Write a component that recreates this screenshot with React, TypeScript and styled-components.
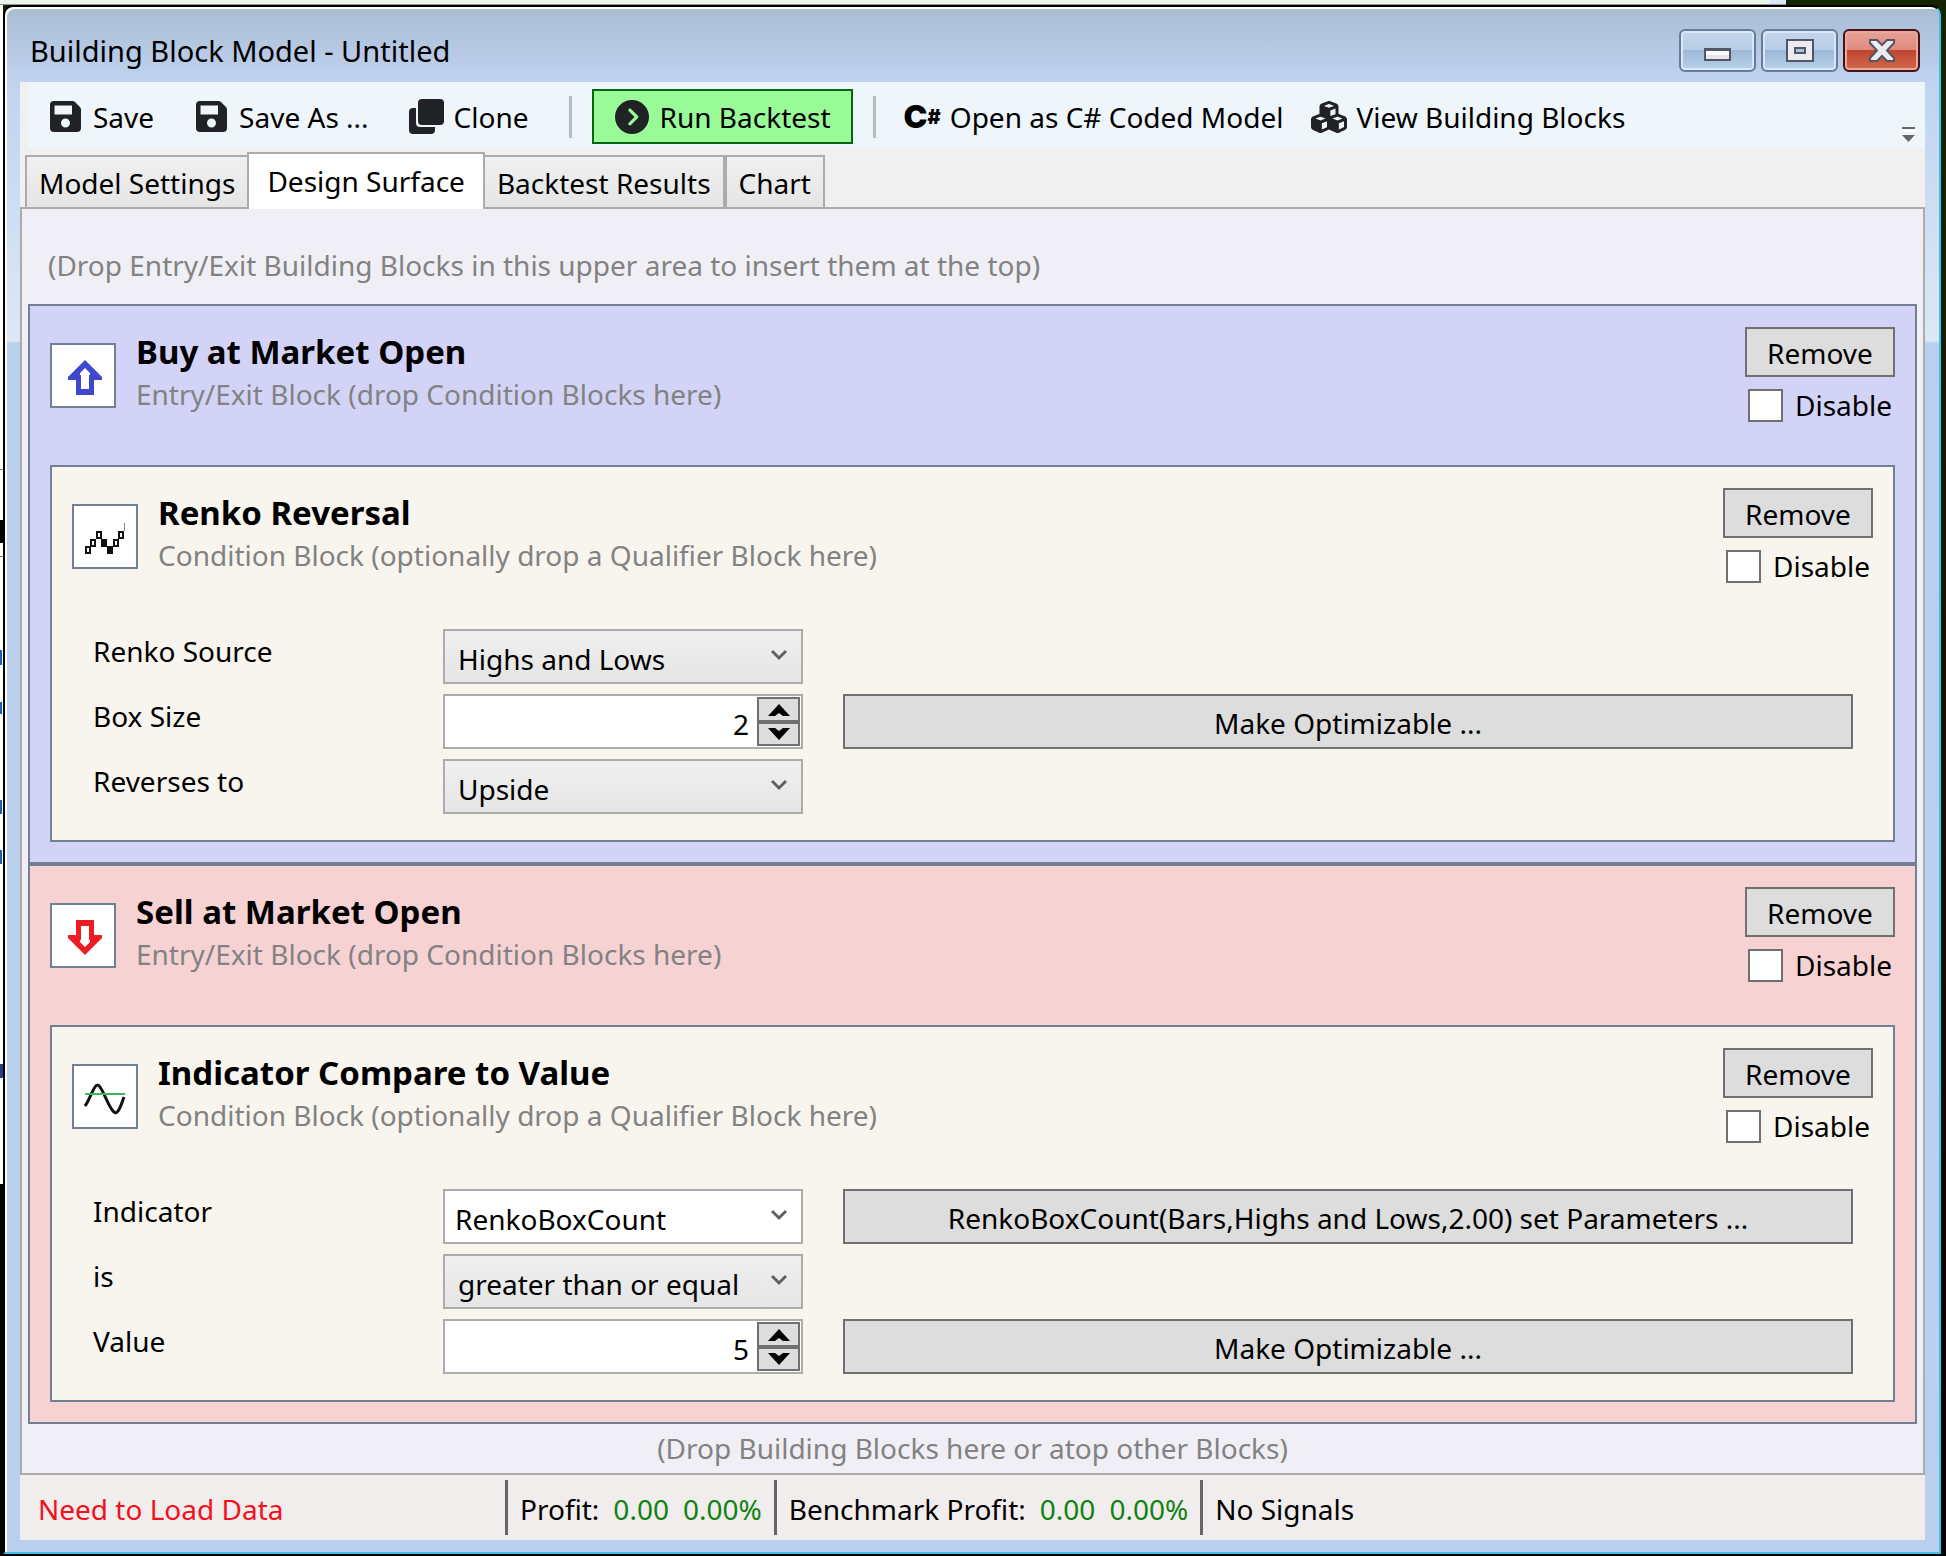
import React, { useId, useState } from "react";
import styled, { createGlobalStyle } from "styled-components";
import { FaCircleChevronRight, FaCubes } from "react-icons/fa6";

const GlobalStyle = createGlobalStyle`
  * { box-sizing: border-box; }
  html, body, #root { height: 100%; }
  body { margin: 0; background: #000; }
  body, button, input, select {
    font-family: "Noto Sans", "Open Sans", sans-serif;
    font-size: 28px;
    line-height: 40px;
    color: #000;
  }
`;

const Desktop = styled.div`
  min-height: 100vh;
  display: flex;
  padding: 5px 5px 2px 3px;
  background:
    linear-gradient(#8c98a0, #8c98a0) 0 4px / 1786px 1px no-repeat,
    linear-gradient(90deg, #ebf6e8 1770px, #dbe6f8 1770px, #dbe6f8 1786px, #142400 1786px) 0 0 / 100% 5px no-repeat,
    linear-gradient(#1a5fb0, #1a5fb0) 0 650px / 2px 15px no-repeat,
    linear-gradient(#1a5fb0, #1a5fb0) 0 702px / 2px 12px no-repeat,
    linear-gradient(#1a5fb0, #1a5fb0) 0 800px / 2px 14px no-repeat,
    linear-gradient(#1a5fb0, #1a5fb0) 0 850px / 2px 14px no-repeat,
    linear-gradient(#2c3c8c, #2c3c8c) 0 1064px / 3px 14px no-repeat,
    linear-gradient(#777, #777) 0 469px / 3px 1px no-repeat,
    linear-gradient(#777, #777) 0 556px / 3px 1px no-repeat,
    linear-gradient(#fff 515px, #000 515px, #000 538px, #fff 538px, #fff 1179px, #000 1179px) 0 5px / 3px 100% no-repeat,
    linear-gradient(#142400, #0a1200 60%, #000);
`;

const Window = styled.main`
  flex: 1;
  display: flex;
  flex-direction: column;
  padding: 0 14px 12px 15px;
  border: 2px solid #000;
  border-color: #000 #37c4f4 #43bde6 #000;
  border-radius: 10px 10px 0 0;
  box-shadow: inset 2px 2px 0 #fff;
  background:
    linear-gradient(#a9bdd3, #b7c9e4 45px, #c0d4f0 76px, transparent 76px),
    linear-gradient(#c0d4f0 76px, #dce8f5 334px, #b9d0ec 336px, #bacfee);
`;

const TitleBar = styled.header`
  display: flex;
  justify-content: space-between;
  align-items: flex-start;
  height: 75px;
  padding: 22px 5px 0 10px;
`;

const WindowTitle = styled.h1`
  margin: 0;
  padding-top: 2px;
  font-size: 29px;
  font-weight: 400;
`;

const CaptionButtons = styled.div`
  display: flex;
  gap: 5px;
`;

const CaptionButton = styled.button<{ $close?: boolean }>`
  display: flex;
  align-items: center;
  justify-content: center;
  width: 77px;
  height: 43px;
  padding: 0;
  border: 2px solid ${(p) => (p.$close ? "#43141a" : "#667c9c")};
  border-radius: 6px;
  box-shadow: inset 0 0 0 2px ${(p) => (p.$close ? "#eca79b" : "#d8e6f6")};
  background: ${(p) =>
    p.$close
      ? "linear-gradient(#e8a195, #dd8b7e 50%, #bf4530 50%, #d2694f)"
      : "linear-gradient(#c3d6ec, #b9cde6 50%, #9bb8d6 50%, #b9d2ea)"};
`;

const Client = styled.div`
  flex: 1;
  display: flex;
  flex-direction: column;
  background: #f0f0f0;
`;

const Toolbar = styled.div`
  display: flex;
  align-items: center;
  height: 67px;
  margin-left: 8px;
  padding: 2px 9px 0 22px;
  background: #eef5fb;
`;

const ToolButton = styled.button<{ $gap: number; $after: number }>`
  display: flex;
  align-items: center;
  gap: ${(p) => p.$gap}px;
  margin-right: ${(p) => p.$after}px;
  padding: 0;
  border: 0;
  background: none;
  white-space: nowrap;
`;

const RunButton = styled(ToolButton)`
  height: 55px;
  padding: 0 20px 0 21px;
  border: 2px solid #0a6410;
  background: #98fb98;
`;

const Divider = styled.span<{ $after: number }>`
  width: 3px;
  height: 42px;
  margin-right: ${(p) => p.$after}px;
  background: #b4bccb;
`;

const CSharp = styled.span`
  display: flex;
  align-items: center;
  font-family: Inter, sans-serif;
  font-size: 32px;
  font-weight: 900;
  line-height: 34px;

  small {
    font-size: 20px;
    line-height: 22px;
  }
`;

const Overflow = styled.button`
  display: flex;
  align-self: flex-end;
  margin: 0 0 6px auto;
  padding: 0;
  border: 0;
  background: none;
`;

const TabList = styled.div`
  display: flex;
  align-items: flex-end;
  height: 58px;
  padding-left: 5px;
`;

const Tab = styled.button<{ $selected?: boolean }>`
  position: relative;
  height: ${(p) => (p.$selected ? 57 : 52)}px;
  margin-right: ${(p) => (p.$selected ? -2 : 0)}px;
  margin-left: ${(p) => (p.$selected ? -2 : 0)}px;
  margin-bottom: ${(p) => (p.$selected ? -2 : 0)}px;
  padding: ${(p) => (p.$selected ? "0 18px 1px" : "2px 12px 0")};
  border: 2px solid #acacac;
  border-bottom: 0;
  background: ${(p) => (p.$selected ? "#fff" : "linear-gradient(#f0f0f0, #e5e5e5)")};
  z-index: ${(p) => (p.$selected ? 1 : 0)};
  white-space: nowrap;
`;

const Surface = styled.section`
  flex: 1;
  display: flex;
  flex-direction: column;
  padding: 0 6px;
  border: 2px solid #acacac;
  background: #f0eff5;
`;

const DropHint = styled.p<{ $top?: boolean }>`
  margin: 0;
  padding: ${(p) => (p.$top ? "36px 20px 19px" : "4px 0")};
  text-align: ${(p) => (p.$top ? "left" : "center")};
  color: #828282;
`;

const Block = styled.article<{ $tone: string }>`
  padding: 20px;
  border: 2px solid #728096;
  background: ${(p) => p.$tone};
`;

const BlockHead = styled.header`
  display: flex;
  align-items: flex-start;
  height: 139px;
`;

const IconBox = styled.span`
  display: flex;
  align-items: center;
  justify-content: center;
  width: 66px;
  height: 65px;
  margin-top: 17px;
  padding: 4px 0 0 4px;
  border: 2px solid #728096;
  background: #fff;
`;

const BlockText = styled.div`
  flex: 1;
  padding: 4px 0 0 20px;
`;

const BlockTitle = styled.h2`
  margin: 0;
  font-size: 33px;
  font-weight: 700;
  line-height: 44px;
`;

const BlockNote = styled.p`
  margin: 0;
  color: #828282;
`;

const BlockActions = styled.div`
  width: 150px;
  padding-top: 1px;
`;

const PushButton = styled.button<{ $tall?: boolean }>`
  width: 100%;
  height: ${(p) => (p.$tall ? 55 : 50)}px;
  padding: 2px 0 0;
  border: 2px solid #707070;
  background: #ddd;
`;

const CheckLabel = styled.label`
  display: flex;
  align-items: center;
  gap: 12px;
  margin-top: 8px;
  padding-left: 3px;
`;

const CheckBox = styled.input`
  appearance: none;
  width: 35px;
  height: 33px;
  margin: 0;
  border: 2px solid #707070;
  background: #fff;

  &:checked { box-shadow: inset 0 0 0 6px #fff; background: #212121; }
`;

const Form = styled.div`
  display: grid;
  gap: 10px;
  padding: 3px 20px 6px;
`;

const FormRow = styled.div`
  display: grid;
  grid-template-columns: 351px 360px 1fr;
  height: 55px;
`;

const FieldLabel = styled.label`
  padding: 2px 0 0 1px;
`;

const ActionCell = styled.div`
  padding-left: 40px;
`;

const SelectFrame = styled.div<{ $editable?: boolean }>`
  display: grid;
  align-items: center;
  height: 55px;
  border: 2px solid #acacac;
  background: ${(p) => (p.$editable ? "#fff" : "linear-gradient(#f0f0f0, #e5e5e5)")};

  > * { grid-area: 1 / 1; }
  svg { justify-self: end; margin: 0 14px 3px 0; pointer-events: none; }
`;

const Select = styled.select<{ $editable?: boolean }>`
  appearance: none;
  width: 100%;
  height: 51px;
  padding: 4px 54px 0 ${(p) => (p.$editable ? 10 : 13)}px;
  border: 0;
  background: none;
`;

const Spinner = styled.div`
  display: flex;
  height: 55px;
  padding: 1px;
  border: 2px solid #acacac;
  background: #fff;
`;

const NumberInput = styled.input`
  flex: 1;
  min-width: 0;
  padding: 5px 8px 0 0;
  border: 0;
  background: none;
  text-align: right;
`;

const SpinButtons = styled.div`
  display: grid;
  grid-template-rows: 1fr 1fr;
  width: 43px;
`;

const SpinButton = styled.button`
  display: flex;
  align-items: center;
  justify-content: center;
  padding: 1px 0 0;
  border: 2px solid #707070;
  background: #ddd;
`;

const StatusBar = styled.footer`
  display: flex;
  align-items: center;
  height: 65px;
  background: #f0edec;
`;

const StatusItem = styled.div<{ $first?: boolean }>`
  display: flex;
  align-items: center;
  gap: 14px;
  width: ${(p) => (p.$first ? "485px" : "auto")};
  height: 55px;
  padding: ${(p) => (p.$first ? "3px 0 0 18px" : "3px 12px 0")};
  border-left: ${(p) => (p.$first ? "0" : "3px solid #666")};
  color: ${(p) => (p.$first ? "#f4101c" : "#000")};
  white-space: nowrap;
`;

const Amount = styled.span`
  color: #128212;
`;

const SaveIcon = () => (
  <svg width="31" height="31" viewBox="0 0 31 31" aria-hidden="true">
    <path fillRule="evenodd" fill="#212226" d="M4 0h18.500q1.500 0 2.500 1l5 5q1 1 1 2.500V27q0 4-4 4H4q-4 0-4-4V4q0-4 4-4zM4.500 4.500v9h17.500v-9zM15.500 17.500a4.500 4.500 0 1 0 0 9a4.500 4.500 0 1 0 0-9z" />
  </svg>
);

const CloneIcon = () => (
  <svg width="35" height="35" viewBox="0 0 35 35" aria-hidden="true">
    <rect x="9" y="0" width="26" height="26" rx="4" fill="#212226" />
    <path fill="#212226" d="M4 9h3v15q0 4 4 4h15v3q0 4-4 4H4q-4 0-4-4V13q0-4 4-4z" />
  </svg>
);

const OverflowIcon = () => (
  <svg width="14" height="16" viewBox="0 0 14 16" aria-hidden="true">
    <path fill="#fff" d="M2 3h12v2H2zM2 9h12L8 16z" />
    <path fill="#666" d="M0 0h13v2H0zM0 8h13L6.500 15z" />
  </svg>
);

const MinimizeIcon = () => (
  <svg width="28" height="23" viewBox="0 0 28 23" aria-hidden="true">
    <rect x="1" y="10" width="25" height="11" fill="#e6e6ea" stroke="#535666" strokeWidth="2" />
    <path fill="#535666" d="M0 9h27v3H0z" />
    <path fill="#fff" d="M2 12h23v4H2z" />
  </svg>
);

const MaximizeIcon = () => (
  <svg width="28" height="23" viewBox="0 0 28 23" aria-hidden="true">
    <rect x="1" y="1" width="26" height="21" fill="#ececf0" stroke="#535666" strokeWidth="2" />
    <rect x="9" y="9" width="10" height="5" fill="#a9c1de" stroke="#535666" strokeWidth="2" />
  </svg>
);

const CloseIcon = () => (
  <svg width="28" height="23" viewBox="0 0 28 23" aria-hidden="true">
    <path fill="#ececf0" stroke="#535666" strokeWidth="2" d="M2 1h7l5 5 5-5h7v3l-7 7.500 7 7.500v3h-7l-5-5-5 5H2v-3l7-7.500L2 4z" />
  </svg>
);

const ArrowIcon = ({ down }: { down?: boolean }) => (
  <svg width="34" height="35" viewBox="0 0 34 35" aria-hidden="true">
    <g transform={down ? "rotate(180 17 17.500)" : undefined}>
      <path fillRule="evenodd" fill={down ? "#ed1c24" : "#3f48cc"} d="M17 0L34 17v3h-8v15H8V20H0v-3zM17 8l-5 5v2h1v14h8V15h1v-2z" />
    </g>
  </svg>
);

const RenkoIcon = () => (
  <svg width="46" height="32" viewBox="0 0 46 32" aria-hidden="true">
    <g fill="none" stroke="#111" strokeWidth="2">
      <path d="M2 24h4v6H2zM7 17h4v6H7zM13 9h4v6h-4zM30 17h4v6h-4zM35 9h4v6h-4z" />
      <path fill="#111" d="M18 17h4v6h-4zM24 24h4v6h-4z" />
      <path stroke="#888" strokeWidth="1" d="M40.500 0v8" />
    </g>
  </svg>
);

const WaveIcon = () => (
  <svg width="46" height="32" viewBox="0 0 46 32" aria-hidden="true">
    <path fill="none" stroke="#111" strokeWidth="3" d="M1 23C5 18 7 10 11 4q2.500-4 5 0C21 11 25 25 30 29q2 2 4-1C37 24 38 19 40 14" />
    <path stroke="#3cb55c" strokeWidth="2" d="M1 11h40" />
  </svg>
);

const ChevronDown = () => (
  <svg width="16" height="12" viewBox="0 0 16 12" aria-hidden="true">
    <path fill="none" stroke="#606060" strokeWidth="3" d="M1 2l7 7 7-7" />
  </svg>
);

const SpinArrow = ({ down }: { down?: boolean }) => (
  <svg width="22" height="12" viewBox="0 0 22 12" aria-hidden="true">
    <path transform={down ? "rotate(180 11 6)" : undefined} d="M11 0l11 12h-7l-4-3-4 3H0z" />
  </svg>
);

interface HeadProps {
  icon: React.ReactNode;
  title: string;
  note: string;
}

function Head({ icon, title, note }: HeadProps) {
  const [disabled, setDisabled] = useState(false);
  const id = useId();
  return (
    <BlockHead>
      <IconBox>{icon}</IconBox>
      <BlockText>
        <BlockTitle>{title}</BlockTitle>
        <BlockNote>{note}</BlockNote>
      </BlockText>
      <BlockActions>
        <PushButton type="button">Remove</PushButton>
        <CheckLabel htmlFor={id}>
          <CheckBox id={id} type="checkbox" checked={disabled} onChange={(e) => setDisabled(e.target.checked)} />
          Disable
        </CheckLabel>
      </BlockActions>
    </BlockHead>
  );
}

interface SelectRowProps {
  label: string;
  options: string[];
  editable?: boolean;
  action?: string;
}

function SelectRow({ label, options, editable, action }: SelectRowProps) {
  const id = useId();
  return (
    <FormRow>
      <FieldLabel htmlFor={id}>{label}</FieldLabel>
      <SelectFrame $editable={editable}>
        <Select id={id} $editable={editable} defaultValue={options[0]}>
          {options.map((o) => (
            <option key={o}>{o}</option>
          ))}
        </Select>
        <ChevronDown />
      </SelectFrame>
      {action && (
        <ActionCell>
          <PushButton type="button" $tall>{action}</PushButton>
        </ActionCell>
      )}
    </FormRow>
  );
}

function NumberRow({ label, initial }: { label: string; initial: number }) {
  const [value, setValue] = useState(initial);
  const id = useId();
  return (
    <FormRow>
      <FieldLabel htmlFor={id}>{label}</FieldLabel>
      <Spinner>
        <NumberInput id={id} inputMode="numeric" value={value} onChange={(e) => setValue(Number(e.target.value) || 0)} />
        <SpinButtons>
          <SpinButton type="button" aria-label={`Increase ${label}`} onClick={() => setValue(value + 1)}>
            <SpinArrow />
          </SpinButton>
          <SpinButton type="button" aria-label={`Decrease ${label}`} onClick={() => setValue(value - 1)}>
            <SpinArrow down />
          </SpinButton>
        </SpinButtons>
      </Spinner>
      <ActionCell>
        <PushButton type="button" $tall>Make Optimizable ...</PushButton>
      </ActionCell>
    </FormRow>
  );
}

const ENTRY_NOTE = "Entry/Exit Block (drop Condition Blocks here)";
const CONDITION_NOTE = "Condition Block (optionally drop a Qualifier Block here)";

export default function App() {
  return (
    <>
      <GlobalStyle />
      <Desktop>
        <Window>
          <TitleBar>
            <WindowTitle>Building Block Model - Untitled</WindowTitle>
            <CaptionButtons>
              <CaptionButton type="button" aria-label="Minimize"><MinimizeIcon /></CaptionButton>
              <CaptionButton type="button" aria-label="Maximize"><MaximizeIcon /></CaptionButton>
              <CaptionButton type="button" aria-label="Close" $close><CloseIcon /></CaptionButton>
            </CaptionButtons>
          </TitleBar>
          <Client>
            <Toolbar role="toolbar">
              <ToolButton type="button" $gap={12} $after={42}><SaveIcon />Save</ToolButton>
              <ToolButton type="button" $gap={12} $after={40}><SaveIcon />Save As ...</ToolButton>
              <ToolButton type="button" $gap={10} $after={40}><CloneIcon />Clone</ToolButton>
              <Divider $after={20} />
              <RunButton type="button" $gap={11} $after={20}>
                <FaCircleChevronRight size={34} color="#212226" />Run Backtest
              </RunButton>
              <Divider $after={28} />
              <ToolButton type="button" $gap={9} $after={28}>
                <CSharp>C<small>#</small></CSharp>Open as C# Coded Model
              </ToolButton>
              <ToolButton type="button" $gap={9} $after={0}>
                <FaCubes size={36} color="#212226" />View Building Blocks
              </ToolButton>
              <Overflow type="button" aria-label="Toolbar options"><OverflowIcon /></Overflow>
            </Toolbar>
            <TabList role="tablist">
              <Tab type="button" role="tab">Model Settings</Tab>
              <Tab type="button" role="tab" aria-selected $selected>Design Surface</Tab>
              <Tab type="button" role="tab">Backtest Results</Tab>
              <Tab type="button" role="tab">Chart</Tab>
            </TabList>
            <Surface>
              <DropHint $top>(Drop Entry/Exit Building Blocks in this upper area to insert them at the top)</DropHint>
              <Block $tone="#d3d3f7">
                <Head icon={<ArrowIcon />} title="Buy at Market Open" note={ENTRY_NOTE} />
                <Block $tone="#f7f5ee">
                  <Head icon={<RenkoIcon />} title="Renko Reversal" note={CONDITION_NOTE} />
                  <Form>
                    <SelectRow label="Renko Source" options={["Highs and Lows"]} />
                    <NumberRow label="Box Size" initial={2} />
                    <SelectRow label="Reverses to" options={["Upside", "Downside"]} />
                  </Form>
                </Block>
              </Block>
              <Block $tone="#f6d2d3">
                <Head icon={<ArrowIcon down />} title="Sell at Market Open" note={ENTRY_NOTE} />
                <Block $tone="#f7f5ee">
                  <Head icon={<WaveIcon />} title="Indicator Compare to Value" note={CONDITION_NOTE} />
                  <Form>
                    <SelectRow
                      label="Indicator"
                      options={["RenkoBoxCount"]}
                      editable
                      action="RenkoBoxCount(Bars,Highs and Lows,2.00) set Parameters ..."
                    />
                    <SelectRow label="is" options={["greater than or equal to"]} />
                    <NumberRow label="Value" initial={5} />
                  </Form>
                </Block>
              </Block>
              <DropHint>(Drop Building Blocks here or atop other Blocks)</DropHint>
            </Surface>
            <StatusBar>
              <StatusItem $first>Need to Load Data</StatusItem>
              <StatusItem>Profit: <Amount>0.00</Amount><Amount>0.00%</Amount></StatusItem>
              <StatusItem>Benchmark Profit: <Amount>0.00</Amount><Amount>0.00%</Amount></StatusItem>
              <StatusItem>No Signals</StatusItem>
            </StatusBar>
          </Client>
        </Window>
      </Desktop>
    </>
  );
}
